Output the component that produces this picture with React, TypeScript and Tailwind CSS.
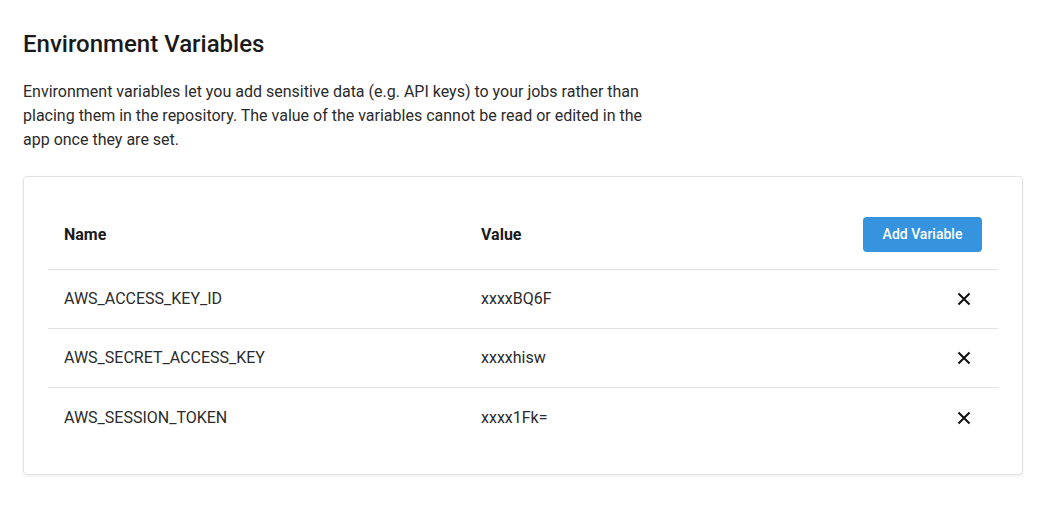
import React from "react";

const rows = [
  { name: "AWS_ACCESS_KEY_ID", value: "xxxxBQ6F" },
  { name: "AWS_SECRET_ACCESS_KEY", value: "xxxxhisw" },
  { name: "AWS_SESSION_TOKEN", value: "xxxx1Fk=" },
];

function XIcon() {
  return (
    <svg width="14" height="14" viewBox="0 0 14 14" fill="none">
      <path d="M1.5 1.5L12.5 12.5M12.5 1.5L1.5 12.5" stroke="#111" strokeWidth="2" />
    </svg>
  );
}

export default function App() {
  return (
    <div className="min-h-[522px] bg-white px-[23px] pt-[29px] text-[#222]" style={{ fontFamily: "Roboto, 'Noto Sans', sans-serif" }}>
      <h1 className="text-[24px] leading-[30px] font-medium text-[#1a1a1a]">Environment Variables</h1>
      <p className="mt-[21px] w-[630px] text-[16px] leading-[24px] text-[#2b2b2b]">
        Environment variables let you add sensitive data (e.g. API keys) to your jobs rather than placing them in the repository. The value of the variables cannot be read or edited in the app once they are set.
      </p>
      <div className="mt-[24px] w-[1000px] rounded-[4px] border border-[#e3e3e3] shadow-[0_1px_3px_rgba(0,0,0,0.08)] px-[24px] pt-[24px] pb-[27px]">
        <div className="grid grid-cols-[418px_1fr_auto] items-start h-[69px] pt-[16px] border-b border-[#e2e2e2]">
          <div className="pl-[16px] h-[36px] flex items-center text-[16px] font-bold text-[#1a1a1a]">Name</div>
          <div className="pl-[15px] h-[36px] flex items-center text-[16px] font-bold text-[#1a1a1a]">Value</div>
          <div className="pr-[16px]">
            <button className="h-[35px] w-[119px] rounded-[4px] bg-[#3594dd] text-[14px] font-medium text-white">Add Variable</button>
          </div>
        </div>
        {rows.map((r, i) => (
          <div key={r.name} className={`grid grid-cols-[418px_1fr_auto] items-center h-[59px] ${i < rows.length - 1 ? "border-b border-[#e2e2e2]" : ""}`}>
            <div className="pl-[16px] text-[16px] text-[#2b2b2b]">{r.name}</div>
            <div className="pl-[15px] text-[16px] text-[#2b2b2b]">{r.value}</div>
            <div className="pr-[27px] flex items-center">
              <XIcon />
            </div>
          </div>
        ))}
      </div>
    </div>
  );
}
